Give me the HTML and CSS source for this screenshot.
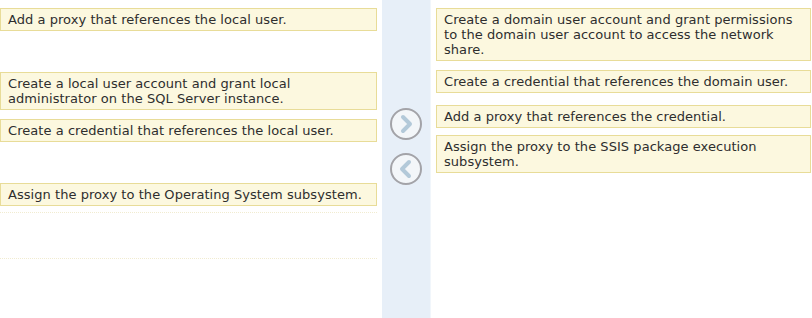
FILE: index.html
```html
<html>

<head>
  <link rel="stylesheet" href="styles.css">
</head>

<body>
  <div class="column left">
    <div class="item">Add a proxy that references the local user.</div>
    <div class="item gap-big">Create a local user account and grant local<br>administrator on the SQL Server instance.</div>
    <div class="item gap-small">Create a credential that references the local user.</div>
    <div class="item gap-big">Assign the proxy to the Operating System subsystem.</div>
    <div class="slot"></div>
  </div>

  <div class="divider">
    <div class="arrow first">
      <svg width="20" height="20" viewBox="0 0 20 20">
        <polyline points="7,3 14,10 7,17" />
      </svg>
    </div>
    <div class="arrow">
      <svg width="20" height="20" viewBox="0 0 20 20">
        <polyline points="13,3 6,10 13,17" />
      </svg>
    </div>
  </div>

  <div class="column right">
    <div class="item">Create a domain user account and grant permissions<br>to the domain user account to access the network<br>share.</div>
    <div class="item r2">Create a credential that references the domain user.</div>
    <div class="item r3">Add a proxy that references the credential.</div>
    <div class="item r4">Assign the proxy to the SSIS package execution<br>subsystem.</div>
  </div>
</body>

</html>
```

FILE: styles.css
```css
html,
body {
  margin: 0;
  height: 100%;
}

body {
  display: flex;
  flex-direction: row;
  align-items: stretch;

  font-family: "DejaVu Sans", Verdana, sans-serif;
  font-size: 13px;
  letter-spacing: 0.05px;
  color: #2e2e2e;
  background: #fff;
}

.column {
  display: flex;
  flex-direction: column;
  padding-top: 8px;
}

.left {
  width: 377px;
}

.right {
  width: 375px;
}

.item {
  background: #fcf8df;
  border: 1px solid #e8dc98;
  padding: 3px 7px;
  line-height: 15px;
  white-space: nowrap;
}

.gap-big {
  margin-top: 41px;
}

.gap-small {
  margin-top: 9px;
}

.r2 {
  margin-top: 9px;
}

.r3 {
  margin-top: 12px;
}

.r4 {
  margin-top: 7px;
}

.slot {
  height: 45px;
  margin-top: 6px;
  border-top: 1px dotted #f1ecd0;
  border-bottom: 1px dotted #f1ecd0;
}

.divider {
  width: 48px;
  margin: 0 5px;
  background: #e7eff8;
  border-right: 1px solid #f1f6fb;

  display: flex;
  flex-direction: column;
  align-items: center;
}

.arrow {
  width: 28px;
  height: 28px;
  border: 2px solid #a3a3a8;
  border-radius: 50%;
  background: #f3f6f9;

  display: flex;
  justify-content: center;
  align-items: center;
  margin-top: 13px;
}

.arrow.first {
  margin-top: 108px;
}

.arrow polyline {
  fill: none;
  stroke: #b3c9d9;
  stroke-width: 4;
  stroke-linecap: round;
  stroke-linejoin: round;
}
```
